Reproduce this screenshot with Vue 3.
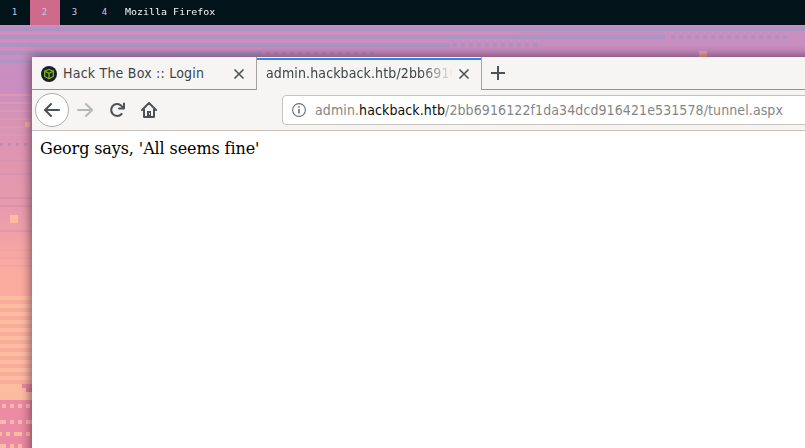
<script setup>
const workspaces = [1, 2, 3, 4]
const lines = []
// [x, y, width, height, colour]
for (let i = 0; i < 4; i++) {
  lines.push([0, 27 + i * 8, [805, 665, 450, 262][i], 4, '#a996c5'])
}
lines.push([0, 32, 515, 2, '#d68bbc'], [0, 40, 450, 2, '#d68bbc'], [0, 48, 262, 2, '#d68bbc'], [0, 56, 32, 2, '#d18bbd'])
lines.push([0, 60, 32, 3, '#ad95c8'])
const dots = []
for (let x = 671; x < 790; x += 8) dots.push([x, 35, 4, 4, '#ae92c4'])
for (let x = 453; x < 540; x += 8) dots.push([x, 43, 4, 4, '#ae91c0'])
for (let x = 266; x < 372; x += 8) dots.push([x, 51, 4, 4, '#b58bb8'])
for (let x = 115; x < 180; x += 8) dots.push([x, 48, 4, 4, '#d787bc'])
for (let y = 94; y < 140; y += 8) lines.push([0, y, 32, 2, '#dc99b1'])
for (let x = 0; x < 32; x += 8) dots.push([x, 143, 3, 3, '#c68db4'])
for (const y of [160, 173]) lines.push([0, y, 32, 2, '#d596b4'])
for (const y of [197, 205]) lines.push([0, y, 32, 2, '#db92ac'])
for (const y of [230]) lines.push([0, y, 32, 2, '#e397a9'])
for (const y of [249, 257, 265]) lines.push([0, y, 32, 2, '#f3a4a3'])
for (let y = 296; y < 384; y += 8) lines.push([0, y, 32, 4, '#fcbe9e'])
lines.push([0, 384, 32, 16, '#fcbc9f'], [22, 384, 10, 4, '#e58ba2'], [26, 388, 6, 4, '#df819e'], [0, 400, 32, 48, '#eb8ba5'])
for (let x = 2; x < 32; x += 8) dots.push([x, 404, 4, 4, '#ffb9ad'])
dots.push([0, 420, 6, 4, '#ffb8ab'], [10, 420, 4, 4, '#ffb8ab'], [18, 420, 4, 4, '#ffb8ab'], [26, 420, 6, 4, '#ffb8ab'])
dots.push([0, 432, 2, 4, '#ffbe9d'], [6, 432, 4, 4, '#ffbe9d'], [14, 432, 8, 4, '#ffbe9d'], [26, 432, 4, 4, '#ffbe9d'])
dots.push([0, 444, 6, 4, '#ffbe9d'], [10, 444, 4, 4, '#ffbe9d'], [18, 444, 4, 4, '#ffbe9d'])
dots.push([699, 51, 8, 8, '#efaa9f'], [10, 215, 8, 8, '#ffbd9e'], [25, 122, 5, 5, '#f0ad9f'])
</script>

<template>
  <div class="desktop">
    <svg class="wallpaper" width="805" height="448" shape-rendering="crispEdges">
      <defs>
        <linearGradient id="sky" x1="0" y1="0" x2="0" y2="448" gradientUnits="userSpaceOnUse">
          <stop offset="0" stop-color="#ca8fc0" /><stop offset=".19" stop-color="#c98dc0" />
          <stop offset=".27" stop-color="#d794b7" /><stop offset=".36" stop-color="#e196b1" />
          <stop offset=".47" stop-color="#e79bac" /><stop offset=".55" stop-color="#f5a5a5" />
          <stop offset=".61" stop-color="#fbac9f" /><stop offset="1" stop-color="#fbac9f" />
        </linearGradient>
      </defs>
      <rect width="805" height="448" fill="url(#sky)" />
      <rect v-for="(r, i) in [...lines, ...dots]" :key="i" :x="r[0]" :y="r[1]" :width="r[2]" :height="r[3]" :fill="r[4]" />
    </svg>
    <header class="topbar">
      <span v-for="n in workspaces" :key="n" class="workspace" :class="{ current: n === 2 }">{{ n }}</span>
      <span class="window-title">Mozilla Firefox</span>
    </header>
    <section class="window">
      <div class="tabs">
        <div class="tab first">
          <svg class="favicon" width="16" height="16" viewBox="0 0 16 16">
            <circle cx="8" cy="8" r="8" fill="#17202b" />
            <path d="M8 3.5 12.3 5.2V10.5L8 12.7 3.7 10.5V5.2ZM3.7 5.2 8 7.2 12.3 5.2M8 7.2V12.5" fill="none" stroke="#86b817" stroke-width="1.25" stroke-linejoin="round" />
          </svg>
          <span class="label">Hack The Box :: Login</span>
          <svg class="close" width="12" height="12" viewBox="0 0 12 12"><path d="M1.5 1.5 10.5 10.5M10.5 1.5 1.5 10.5" /></svg>
        </div>
        <div class="tab active">
          <span class="label faded">admin.hackback.htb/2bb6916</span>
          <svg class="close" width="12" height="12" viewBox="0 0 12 12"><path d="M1.5 1.5 10.5 10.5M10.5 1.5 1.5 10.5" /></svg>
        </div>
        <div class="tab-rest">
          <svg width="14" height="14" viewBox="0 0 14 14"><path d="M7 0V14M0 7H14" stroke="#4c5356" stroke-width="2" /></svg>
        </div>
      </div>
      <nav class="toolbar">
        <button class="back" aria-label="Back">
          <svg width="16" height="16" viewBox="0 0 16 16"><path d="M15 8H1.5M7 2 1 8 7 14" fill="none" stroke="#4c5356" stroke-width="2" stroke-linecap="round" stroke-linejoin="round" /></svg>
        </button>
        <svg class="forward" width="16" height="16" viewBox="0 0 16 16"><path d="M1 8H14.5M9 2 15 8 9 14" fill="none" stroke="#b6b8b7" stroke-width="2" stroke-linecap="round" stroke-linejoin="round" /></svg>
        <svg class="reload" width="16" height="16" viewBox="0 0 16 16"><path d="M13.6 5.4A6 6 0 1 0 12.6 12" fill="none" stroke="#4c5356" stroke-width="2.1" stroke-linecap="round" /><path d="M15 1.5V6.5H10" fill="none" stroke="#4c5356" stroke-width="2" stroke-linecap="round" stroke-linejoin="round" /></svg>
        <svg class="home" width="16" height="16" viewBox="0 0 16 16"><path d="M1 8 8 1 15 8M3 7V15H13V7" fill="none" stroke="#4c5356" stroke-width="2" stroke-linecap="round" stroke-linejoin="round" /><path fill-rule="evenodd" d="M6 9H10V15H6ZM8 11V12.5H9V11Z" fill="#4c5356" /></svg>
        <div class="address">
          <svg width="14" height="14" viewBox="0 0 14 14"><circle cx="7" cy="7" r="6.4" fill="none" stroke="#6d7072" stroke-width="1.1" /><path d="M7 6V10.5M7 3.2V4.8" stroke="#6d7072" stroke-width="1.6" /></svg>
          <span class="url">admin.<b>hackback.htb</b>/2bb6916122f1da34dcd916421e531578/tunnel.aspx</span>
        </div>
      </nav>
      <main class="page">Georg says, 'All seems fine'</main>
    </section>
  </div>
</template>

<style>
body { margin: 0; overflow: hidden; }
</style>
<style scoped>
.desktop { position: relative; width: 805px; height: 448px; overflow: hidden; }
.wallpaper { position: absolute; inset: 0; }
.topbar { position: relative; display: flex; height: 25px; background: #03131a; font: 9px/25px "DejaVu Sans Mono", monospace; color: #c9c5df; }
.workspace { width: 30px; text-align: center; box-sizing: border-box; padding-right: 1px; }
.current { background: #ce6b8d; }
.window-title { margin-left: 5px; color: #f5f7f7; white-space: nowrap; transform: scaleX(1.11); transform-origin: left; }
.window { position: relative; box-sizing: border-box; margin: 32px 0 0 32px; width: 790px; height: 400px; background: #fff; box-shadow: 0 0 10px 1px rgba(40, 15, 35, .6); }
.tabs { display: flex; height: 33px; background: #f6f5f4; font: 14px/32px "DejaVu Sans Condensed", "DejaVu Sans", sans-serif; font-stretch: condensed; color: #3d4447; }
.tab { display: flex; align-items: center; box-sizing: border-box; white-space: nowrap; }
.first { width: 224px; padding: 0 11px 0 9px; border-bottom: 1px solid #929492; letter-spacing: .22px; }
.favicon { margin: 1px 6px 0 0; flex: none; }
.close { margin: 2px 0 0 auto; flex: none; fill: none; stroke: #4c5356; stroke-width: 1.6; }
.active { width: 226px; padding: 0 11px 1px 9px; border-left: 1px solid #a2a3a1; border-right: 1px solid #a2a3a1; background: linear-gradient(#f6f5f4 1px, #3584e4 1px 3px, #f6f5f4 3px); letter-spacing: .12px; }
.faded { width: 188px; mask-image: linear-gradient(to right, #000 155px, transparent 187px); }
.tab-rest { flex: 1; display: flex; align-items: center; padding-left: 9px; border-bottom: 1px solid #929492; }
.toolbar { display: flex; align-items: center; box-sizing: border-box; height: 41px; background: #f6f5f4; border-bottom: 1px solid #c6c2be; padding-left: 3px; }
.toolbar > * { flex: none; }
.back { display: flex; align-items: center; justify-content: center; width: 34px; height: 34px; border: 1px solid #acacaa; border-radius: 50%; background: #fff; padding: 0; box-sizing: border-box; }
.forward { margin-left: 8px; }
.reload, .home { margin-left: 16px; }
.address { display: flex; align-items: center; box-sizing: border-box; width: 600px; height: 30px; margin-left: 125px; padding-left: 9px; border: 1px solid #c7c2be; border-radius: 4px; background: #fff; }
.url { margin-left: 9px; font: 14px/28px "DejaVu Sans Condensed", "DejaVu Sans", sans-serif; font-stretch: condensed; letter-spacing: .1px; color: #858585; white-space: nowrap; }
.url b { font-weight: 400; color: #0c0c0d; }
.page { padding: 8px; font: 16px/19px "DejaVu Serif", serif; letter-spacing: -.1px; color: #000; }
</style>
